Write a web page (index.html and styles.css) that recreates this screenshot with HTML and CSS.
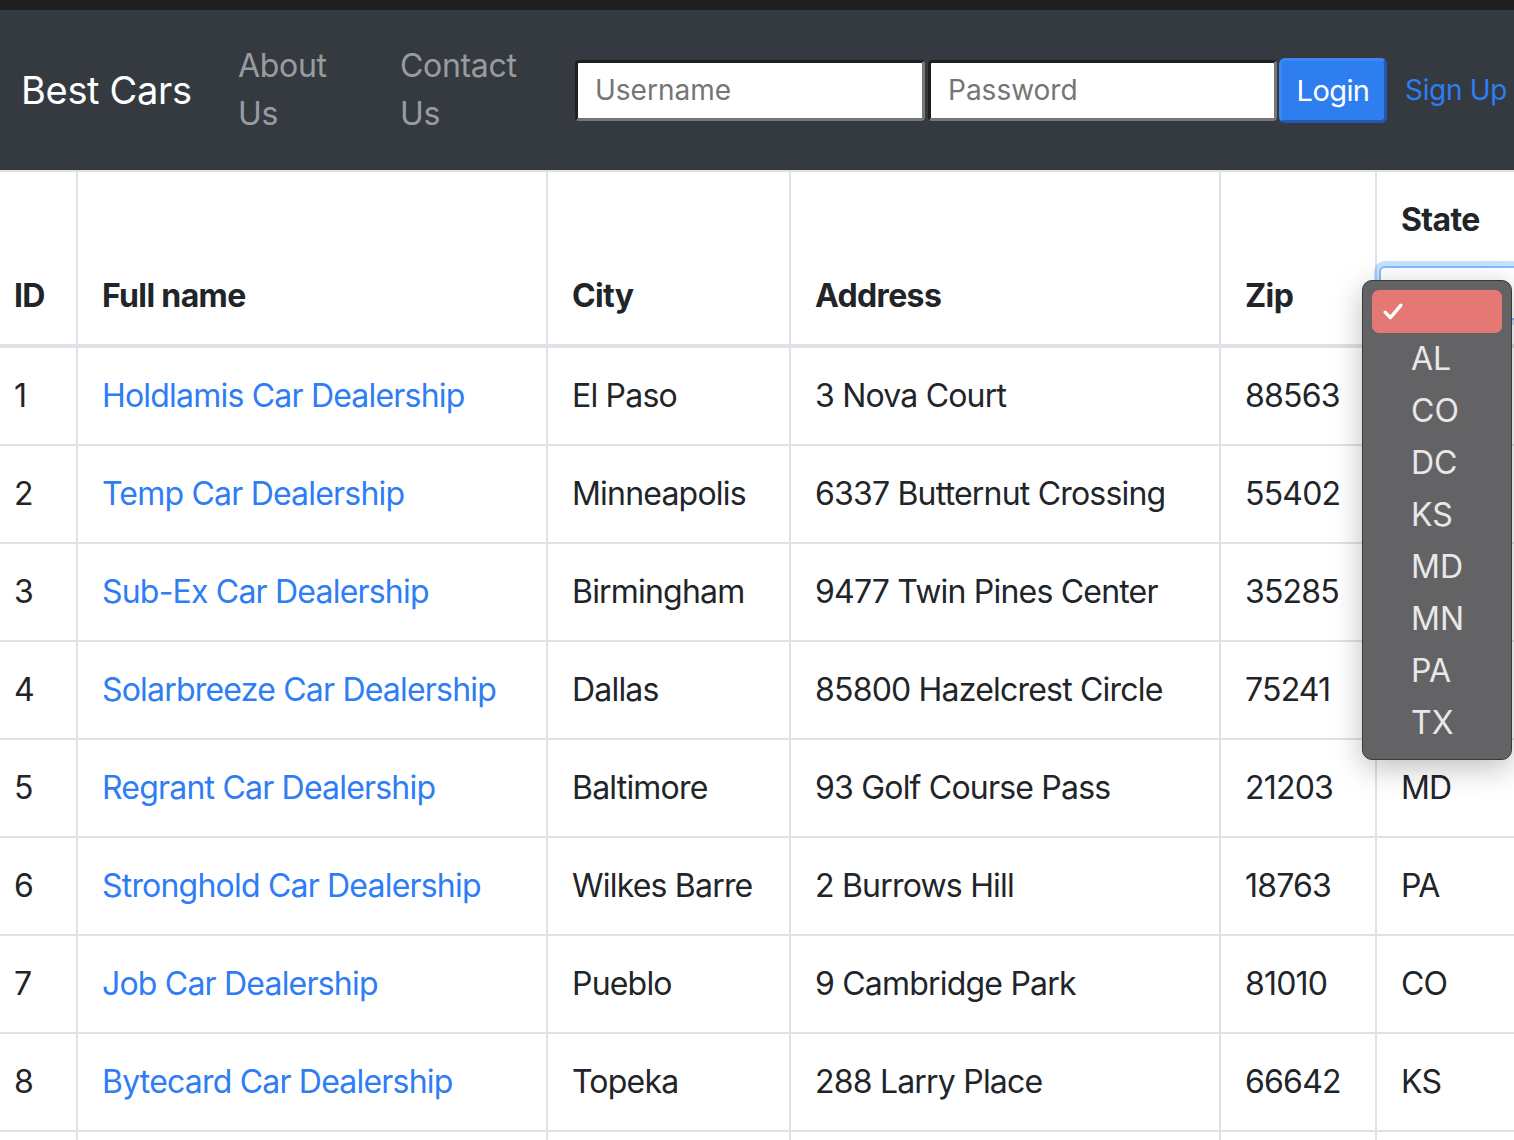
FILE: index.html
```html
<!DOCTYPE html>
<html lang="en">
<head>
<meta charset="utf-8">
<title>Best Cars - Dealers</title>
<link rel="stylesheet" href="styles.css">
</head>
<body>
<div class="topbar"></div>
<nav class="navbar">
  <a class="brand" href="#">Best Cars</a>
  <ul class="nav">
    <li class="nav-item"><a class="nav-link" href="#">About Us</a></li>
    <li class="nav-item"><a class="nav-link" href="#">Contact Us</a></li>
  </ul>
  <form class="login">
    <input class="field" type="text" placeholder="Username">
    <input class="field field-pw" type="password" placeholder="Password">
    <button class="btn-login" type="button">Login</button>
    <a class="signup" href="#">Sign Up</a>
  </form>
</nav>
<main class="content">
  <table class="dealers">
    <thead>
      <tr>
        <th class="c-id">ID</th>
        <th class="c-name">Full name</th>
        <th class="c-city">City</th>
        <th class="c-addr">Address</th>
        <th class="c-zip">Zip</th>
        <th class="c-state">
          <div class="state-label">State</div>
          <div class="state-select"></div>
        </th>
      </tr>
    </thead>
    <tbody>
      <tr><td>1</td><td><a href="#">Holdlamis Car Dealership</a></td><td>El Paso</td><td>3 Nova Court</td><td>88563</td><td>TX</td></tr>
      <tr><td>2</td><td><a href="#">Temp Car Dealership</a></td><td>Minneapolis</td><td>6337 Butternut Crossing</td><td>55402</td><td>MN</td></tr>
      <tr><td>3</td><td><a href="#">Sub-Ex Car Dealership</a></td><td>Birmingham</td><td>9477 Twin Pines Center</td><td>35285</td><td>AL</td></tr>
      <tr><td>4</td><td><a href="#">Solarbreeze Car Dealership</a></td><td>Dallas</td><td>85800 Hazelcrest Circle</td><td>75241</td><td>TX</td></tr>
      <tr><td>5</td><td><a href="#">Regrant Car Dealership</a></td><td>Baltimore</td><td>93 Golf Course Pass</td><td>21203</td><td>MD</td></tr>
      <tr><td>6</td><td><a href="#">Stronghold Car Dealership</a></td><td>Wilkes Barre</td><td>2 Burrows Hill</td><td>18763</td><td>PA</td></tr>
      <tr><td>7</td><td><a href="#">Job Car Dealership</a></td><td>Pueblo</td><td>9 Cambridge Park</td><td>81010</td><td>CO</td></tr>
      <tr><td>8</td><td><a href="#">Bytecard Car Dealership</a></td><td>Topeka</td><td>288 Larry Place</td><td>66642</td><td>KS</td></tr>
      <tr><td>9</td><td><a href="#">Zoomzone Car Dealership</a></td><td>Washington</td><td>4 Everett Alley</td><td>20057</td><td>DC</td></tr>
    </tbody>
  </table>
  <div class="popup">
    <div class="opt opt-selected"><svg class="check" viewBox="0 0 20 17" width="20" height="17"><path d="M2.2 9.2 L7.4 14.6 L17.8 2.4" fill="none" stroke="#fff" stroke-width="3.4" stroke-linecap="round" stroke-linejoin="round"/></svg></div>
    <div class="opt">AL</div>
    <div class="opt">CO</div>
    <div class="opt">DC</div>
    <div class="opt">KS</div>
    <div class="opt">MD</div>
    <div class="opt">MN</div>
    <div class="opt">PA</div>
    <div class="opt">TX</div>
  </div>
</main>
</body>
</html>
```

FILE: styles.css
```css
html {
  overflow: hidden;
}
body {
  margin: 0;
  font-family: Inter, "Noto Sans", sans-serif;
  letter-spacing: -0.02em;
  color: #212529;
  background: #fff;
}
.topbar {
  height: 10px;
  background: #1e1e1e;
}
.navbar {
  height: 160px;
  background: #343a40;
  display: flex;
  align-items: center;
  padding-left: 21px;
  box-sizing: border-box;
  white-space: nowrap;
}
.brand {
  flex-shrink: 0;
  width: 167px;
  font-size: 38px;
  line-height: 60px;
  color: #fff;
  text-decoration: none;
  margin-right: 34px;
}
.nav {
  flex-shrink: 0;
  list-style: none;
  margin: 0;
  padding: 0;
  display: flex;
}
.nav-item {
  width: 162px;
  box-sizing: border-box;
  padding: 0 16px;
  white-space: normal;
}
.nav-link {
  display: block;
  font-size: 32px;
  line-height: 48px;
  color: rgba(255, 255, 255, 0.5);
  text-decoration: none;
}
.login {
  flex-shrink: 0;
  display: flex;
  align-items: center;
  margin-left: 29px;
}
.field {
  flex-shrink: 0;
  width: 350px;
  height: 61px;
  box-sizing: border-box;
  border: 3px solid;
  border-color: #1f1f1f #767676 #767676 #1f1f1f;
  border-radius: 4px;
  padding: 0 17px;
  font-family: inherit;
  font-size: 28px;
  letter-spacing: normal;
  color: #212529;
  background: #fff;
  margin: 0 3px 0 0;
}
.field::placeholder {
  color: #757575;
}
.field-pw {
  width: 349px;
  margin-right: 2px;
}
.btn-login {
  flex-shrink: 0;
  width: 108px;
  height: 65px;
  box-sizing: border-box;
  background: #2f7ef0;
  border: 3px solid;
  border-color: #3a87f5 #2558b0 #2558b0 #3a87f5;
  border-radius: 6px;
  color: #fff;
  font-family: inherit;
  font-size: 29px;
  letter-spacing: -0.02em;
  padding: 0;
}
.signup {
  flex-shrink: 0;
  margin-left: 18px;
  font-size: 28px;
  color: #2e7df5;
  text-decoration: none;
}
.content {
  position: relative;
}
.dealers {
  width: 1514px;
  table-layout: fixed;
  border-collapse: separate;
  border-spacing: 0;
  border-top: 2px solid #dee2e6;
  font-size: 32px;
  line-height: 48px;
  letter-spacing: -0.025em;
}
.dealers th,
.dealers td {
  box-sizing: border-box;
  padding: 24px;
  border-right: 2px solid #dee2e6;
  border-bottom: 2px solid #dee2e6;
  text-align: left;
  vertical-align: top;
  white-space: nowrap;
}
.dealers th {
  vertical-align: bottom;
  font-weight: 700;
  border-bottom-width: 4px;
  letter-spacing: -0.02em;
}
.dealers th:first-child,
.dealers td:first-child {
  padding-left: 14px;
}
.dealers th:last-child,
.dealers td:last-child {
  border-right: none;
}
.c-id { width: 78px; }
.c-name { width: 470px; }
.c-city { width: 243px; }
.c-addr { width: 430px; }
.c-zip { width: 156px; }
.c-state { width: 137px; }
.dealers a {
  color: #2e7df5;
  text-decoration: none;
}
.state-label {
  height: 48px;
}
.state-select {
  margin: 22px 0 0 -22px;
  height: 54px;
  width: 160px;
  box-sizing: border-box;
  border: 2px solid #80bdff;
  border-radius: 6px;
  box-shadow: 0 0 0 5px rgba(0, 123, 255, 0.22);
  background: #fff;
}
.popup {
  position: absolute;
  left: 1362px;
  top: 110px;
  width: 150px;
  height: 480px;
  box-sizing: border-box;
  padding: 9px 9px 0 9px;
  background: #636366;
  border: 1px solid #3a3a3c;
  border-radius: 10px;
  box-shadow: 0 8px 30px rgba(0, 0, 0, 0.25);
  letter-spacing: 0;
}
.opt {
  height: 52px;
  line-height: 52px;
  padding-left: 39px;
  font-size: 32px;
  color: #e8e8e8;
}
.opt-selected {
  height: 43px;
  background: #e57775;
  border-radius: 7px;
  padding-left: 11px;
  display: flex;
  align-items: center;
}
.check {
  display: block;
}
```
